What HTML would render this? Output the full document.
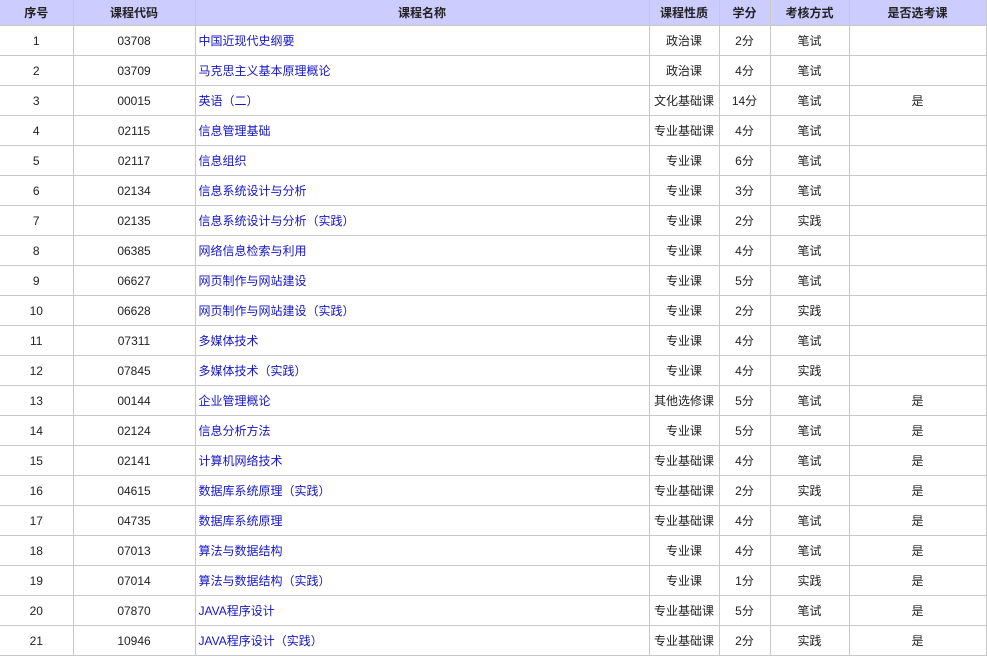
<!DOCTYPE html>
<html><head><meta charset="utf-8"><style>
body{margin:0;background:#fff;font-family:"Liberation Sans","Noto Sans CJK SC",sans-serif;font-size:12px;color:#222}
table{border-collapse:collapse;table-layout:fixed;width:986px}
td,th{border:1px solid #c8c8c8;text-align:center;padding:0;white-space:nowrap;overflow:hidden}
th{background:#ccccff;height:25px;font-weight:bold;color:#222;border-top:none}
td{height:29px}
td.n{text-align:left;padding-left:3px;color:#1515c8}
tr td:first-child,tr th:first-child{border-left:none}
</style></head><body>
<table>
<colgroup><col style="width:73px"><col style="width:122px"><col style="width:454px"><col style="width:70px"><col style="width:51px"><col style="width:79px"><col style="width:137px"></colgroup>
<tr><th>序号</th><th>课程代码</th><th>课程名称</th><th>课程性质</th><th>学分</th><th>考核方式</th><th>是否选考课</th></tr>
<tr><td>1</td><td>03708</td><td class="n">中国近现代史纲要</td><td>政治课</td><td>2分</td><td>笔试</td><td></td></tr>
<tr><td>2</td><td>03709</td><td class="n">马克思主义基本原理概论</td><td>政治课</td><td>4分</td><td>笔试</td><td></td></tr>
<tr><td>3</td><td>00015</td><td class="n">英语（二）</td><td>文化基础课</td><td>14分</td><td>笔试</td><td>是</td></tr>
<tr><td>4</td><td>02115</td><td class="n">信息管理基础</td><td>专业基础课</td><td>4分</td><td>笔试</td><td></td></tr>
<tr><td>5</td><td>02117</td><td class="n">信息组织</td><td>专业课</td><td>6分</td><td>笔试</td><td></td></tr>
<tr><td>6</td><td>02134</td><td class="n">信息系统设计与分析</td><td>专业课</td><td>3分</td><td>笔试</td><td></td></tr>
<tr><td>7</td><td>02135</td><td class="n">信息系统设计与分析（实践）</td><td>专业课</td><td>2分</td><td>实践</td><td></td></tr>
<tr><td>8</td><td>06385</td><td class="n">网络信息检索与利用</td><td>专业课</td><td>4分</td><td>笔试</td><td></td></tr>
<tr><td>9</td><td>06627</td><td class="n">网页制作与网站建设</td><td>专业课</td><td>5分</td><td>笔试</td><td></td></tr>
<tr><td>10</td><td>06628</td><td class="n">网页制作与网站建设（实践）</td><td>专业课</td><td>2分</td><td>实践</td><td></td></tr>
<tr><td>11</td><td>07311</td><td class="n">多媒体技术</td><td>专业课</td><td>4分</td><td>笔试</td><td></td></tr>
<tr><td>12</td><td>07845</td><td class="n">多媒体技术（实践）</td><td>专业课</td><td>4分</td><td>实践</td><td></td></tr>
<tr><td>13</td><td>00144</td><td class="n">企业管理概论</td><td>其他选修课</td><td>5分</td><td>笔试</td><td>是</td></tr>
<tr><td>14</td><td>02124</td><td class="n">信息分析方法</td><td>专业课</td><td>5分</td><td>笔试</td><td>是</td></tr>
<tr><td>15</td><td>02141</td><td class="n">计算机网络技术</td><td>专业基础课</td><td>4分</td><td>笔试</td><td>是</td></tr>
<tr><td>16</td><td>04615</td><td class="n">数据库系统原理（实践）</td><td>专业基础课</td><td>2分</td><td>实践</td><td>是</td></tr>
<tr><td>17</td><td>04735</td><td class="n">数据库系统原理</td><td>专业基础课</td><td>4分</td><td>笔试</td><td>是</td></tr>
<tr><td>18</td><td>07013</td><td class="n">算法与数据结构</td><td>专业课</td><td>4分</td><td>笔试</td><td>是</td></tr>
<tr><td>19</td><td>07014</td><td class="n">算法与数据结构（实践）</td><td>专业课</td><td>1分</td><td>实践</td><td>是</td></tr>
<tr><td>20</td><td>07870</td><td class="n">JAVA程序设计</td><td>专业基础课</td><td>5分</td><td>笔试</td><td>是</td></tr>
<tr><td>21</td><td>10946</td><td class="n">JAVA程序设计（实践）</td><td>专业基础课</td><td>2分</td><td>实践</td><td>是</td></tr>
</table>
</body></html>
